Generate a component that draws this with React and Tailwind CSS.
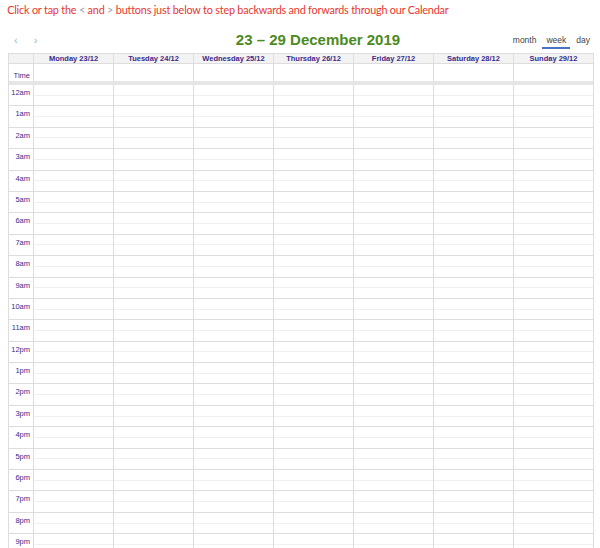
import React from "react";

const days = ["Monday 23/12", "Tuesday 24/12", "Wednesday 25/12", "Thursday 26/12", "Friday 27/12", "Saturday 28/12", "Sunday 29/12"];
const hours = ["12am", "1am", "2am", "3am", "4am", "5am", "6am", "7am", "8am", "9am", "10am", "11am", "12pm", "1pm", "2pm", "3pm", "4pm", "5pm", "6pm", "7pm", "8pm", "9pm"];

const cols = "grid grid-cols-[24px_repeat(7,1fr)]";

export default function App() {
  return (
    <div className="w-[600px] h-[548px] overflow-hidden bg-white" style={{ fontFamily: "'Liberation Sans', Arial, sans-serif" }}>
      <div className="px-[8px] pt-[1px] h-[27px] text-[12px] tracking-[-0.2px] text-[#e8362f] scale-x-[0.9] origin-left whitespace-nowrap" style={{ fontFamily: "Lato, 'Open Sans', sans-serif" }}>
        Click or tap the <span className="text-gray-400">&lt;</span> and <span className="text-gray-400">&gt;</span> buttons just below to step backwards and forwards through our Calendar
      </div>
      <div className="flex items-center justify-between px-[8px] h-[26px]">
        <div className="flex gap-[16px] pl-[6px] text-[11px] text-[#9ab3d6] w-[120px]">
          <span>‹</span><span>›</span>
        </div>
        <div className="text-[#4c8a22] font-bold text-[15px] ml-[36px]">23 – 29 December 2019</div>
        <div className="flex items-center gap-[6px] text-[8.5px] text-[#444] w-[120px] justify-end pr-[2px]">
          <span>month</span>
          <span className="border-b-2 border-[#4a72c4] px-[4px] pb-[1px] mt-[3px]">week</span>
          <span>day</span>
        </div>
      </div>
      <div className="mx-[8px] w-[586px] border border-[#ddd]">
        <div className={`${cols} h-[10px] bg-[#f3f3f3] border-b border-[#ddd]`}>
          <div></div>
          {days.map((d) => (
            <div key={d} className="border-l border-[#ddd] text-center text-[7.5px] font-bold text-[#3b2a8a] leading-[10px]">{d}</div>
          ))}
        </div>
        <div className={`${cols} h-[21px] border-b-[4px] border-[#e6e6e6]`}>
          <div className="text-[7.5px] text-[#3b2a8a] text-right pr-[3px] pt-[6px]">Time</div>
          {days.map((d) => <div key={d} className="border-l border-[#ddd]" />)}
        </div>
        {hours.map((h) => (
          <div key={h} className={`${cols} h-[21.4px]`}>
            <div className="text-[7.5px] text-[#3b2a8a] text-right pr-[3px] pt-[2px] border-b border-[#ddd]">{h}</div>
            {days.map((d) => (
              <div key={d} className="border-l border-[#ddd] border-b border-b-[#ddd] flex flex-col">
                <div className="flex-1 border-b border-[#f0f0f0]" />
                <div className="flex-1" />
              </div>
            ))}
          </div>
        ))}
      </div>
    </div>
  );
}
